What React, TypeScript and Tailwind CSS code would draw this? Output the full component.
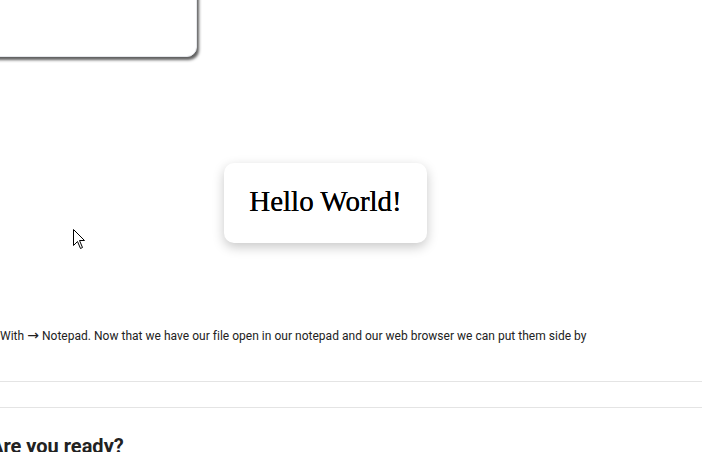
import React from "react";

const Cursor = () => (
  <svg
    width="13"
    height="21"
    viewBox="0 0 13 21"
    className="absolute left-[73px] top-[229px]"
  >
    <path
      d="M0.5 0.5 L0.5 16.5 L4.5 12.5 L7.5 19.5 L9.5 18.5 L6.5 11.5 L11.5 11.5 Z"
      fill="#fff"
      stroke="#000"
      strokeWidth="1"
      strokeLinejoin="miter"
    />
  </svg>
);

const App = () => {
  return (
    <div className="relative w-[702px] h-[452px] overflow-hidden bg-white font-['Roboto',sans-serif]">
      <div className="flex flex-col">
        <div className="-mt-[40px] -ml-[20px] w-[217px] h-[97px] bg-white rounded-[10px] border border-gray-200 shadow-[2px_3px_3px_#5f5f5f]" />

        <div className="mt-[106px] ml-[224px] w-[203px] h-[80px] flex items-center justify-center pb-[3px] bg-white rounded-[10px] shadow-[0_4px_12px_rgba(0,0,0,0.22)]">
          <span className="text-[29px] leading-none text-black font-['Liberation_Serif',serif] [text-shadow:0_0_0.4px_#000]">
            Hello World!
          </span>
        </div>

        <p className="mt-[84px] text-[12px] leading-[18px] text-[#222] whitespace-nowrap tracking-[0.02px]">
          With <span className="font-['DejaVu_Sans',sans-serif] text-[14px] leading-none">→</span> Notepad. Now that we have our file open in our notepad and our
          web browser we can put them side by
        </p>

        <div className="mt-[36px] h-px bg-[#e4e4e4]" />
        <div className="mt-[25px] h-px bg-[#e4e4e4]" />

        <h2 className="mt-[26px] -ml-[10px] text-[20px] leading-[24px] font-bold text-[#222] whitespace-nowrap">
          Are you ready?
        </h2>
      </div>
      <Cursor />
    </div>
  );
};

export default App;
